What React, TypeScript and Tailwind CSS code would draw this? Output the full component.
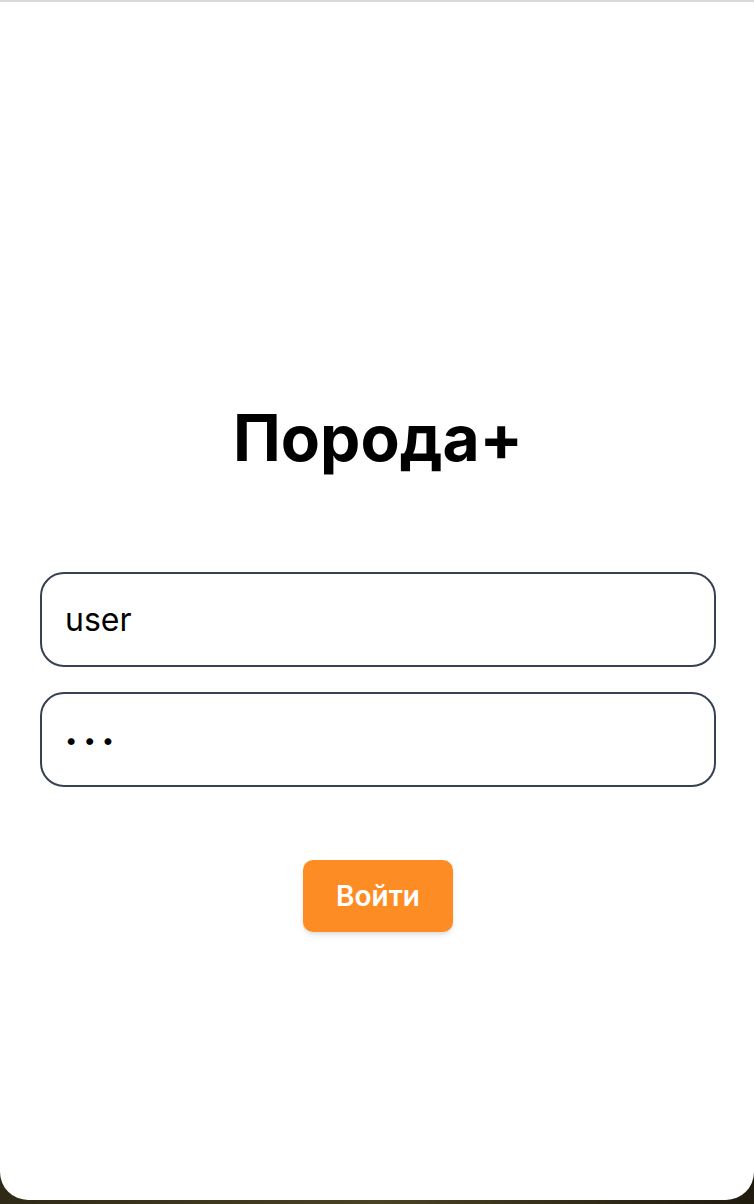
import React, { useState } from 'react';

const App: React.FC = () => {
  const [login, setLogin] = useState('user');
  const [password, setPassword] = useState('123');

  return (
    <div
      className="min-h-screen w-full bg-gradient-to-r from-[#2f2a17] via-[#4a4224] to-[#1f1b0e]"
      style={{ fontFamily: 'Inter, "Noto Sans", sans-serif' }}
    >
      <div className="h-[1200px] w-full bg-white border-t-2 border-[#d9d9d9] rounded-b-[28px] flex flex-col items-center pt-[398px] pl-10 pr-[38px]">
        <h1 className="text-[64px] leading-[76px] font-bold text-black">
          Порода+
        </h1>

        <form
          className="w-full mt-[96px] flex flex-col gap-[25px]"
          onSubmit={(e) => e.preventDefault()}
        >
          <input
            type="text"
            value={login}
            onChange={(e) => setLogin(e.target.value)}
            className="w-full h-[95px] rounded-[24px] border-2 border-[#374151] px-[23px] text-[32px] text-black outline-none bg-white"
          />
          <input
            type="password"
            value={password}
            onChange={(e) => setPassword(e.target.value)}
            className="w-full h-[95px] rounded-[24px] border-2 border-[#374151] px-[23px] text-[22px] tracking-[6px] text-black outline-none bg-white"
          />

          <div className="flex justify-center mt-[48px]">
            <button
              type="submit"
              className="w-[150px] h-[72px] rounded-[10px] bg-[#fe8c25] text-white text-[28px] font-semibold shadow-md"
            >
              Войти
            </button>
          </div>
        </form>
      </div>
    </div>
  );
};

export default App;
